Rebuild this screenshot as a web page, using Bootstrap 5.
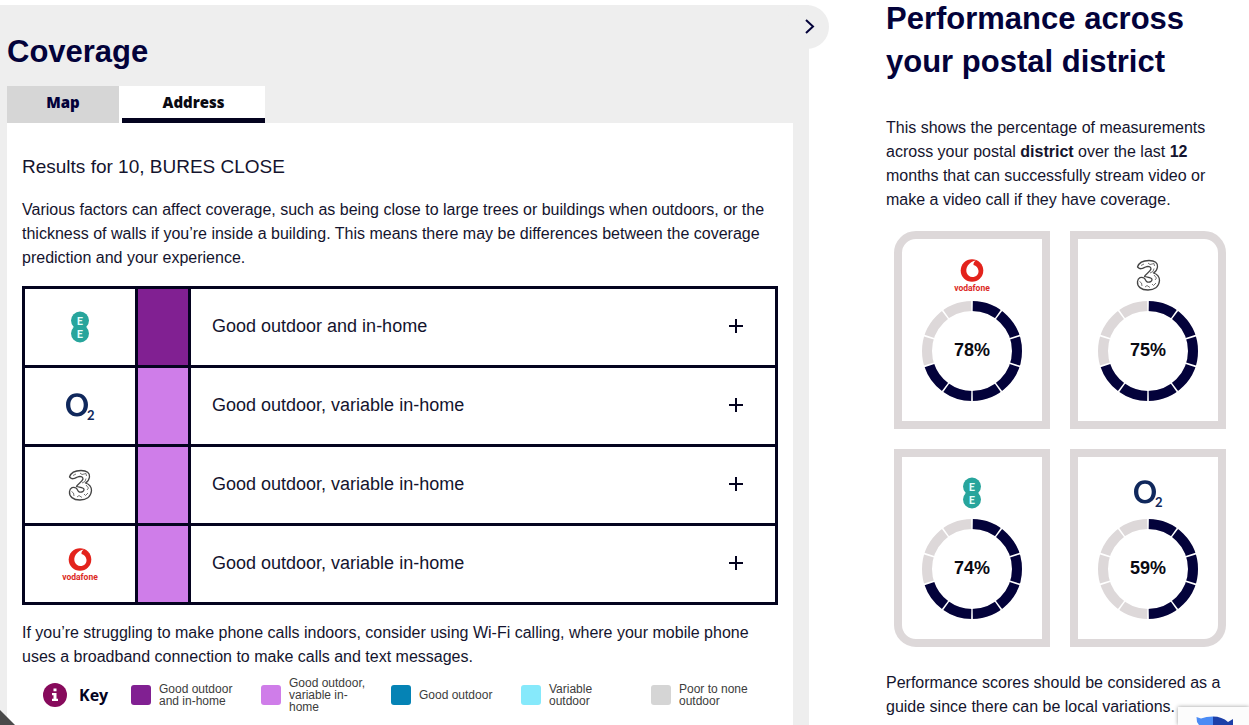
<!DOCTYPE html>
<html lang="en">
<head>
<meta charset="utf-8">
<meta name="viewport" content="width=device-width, initial-scale=1">
<title>Coverage and performance</title>
<link href="https://cdn.jsdelivr.net/npm/bootstrap@5.3.0/dist/css/bootstrap.min.css" rel="stylesheet">
<style>
  :root { --navy: #03023a; --line: #04031f; --grey: #ddd8d9; --good: #812092; --variable: #cf7de9; }
  body { font-family: "Liberation Sans", Arial, sans-serif; font-size: 16px; line-height: 24px; color: #14142e; background: #fff; overflow: hidden; }
  .layout { display: grid; grid-template-columns: minmax(0, 1fr) 440px; min-height: 100vh; }
  .coverage { background: #eee; margin-top: 5px; padding: 27px 16px 0 7px; }
  .title { font-size: 31px; font-weight: 700; color: var(--navy); line-height: 40px; margin: 0 0 14px; }
  .toggle { right: -20px; top: 0; width: 44px; height: 44px; border: 0; border-radius: 50%; background: #eee; color: var(--navy); padding: 0 0 3px 6px; }
  .tabs button { height: 37px; border: 0; font: 800 15px/32px "Open Sans", sans-serif; padding: 0 0 5px; display: block; }
  .tab-map { width: 112px; background: #d6d6d6; color: var(--navy); }
  .tab-address { width: 143px; background: #fff; color: #0a0a12; border-bottom: 5px solid var(--line) !important; padding: 0 !important; }
  .tab-wrap { background: #fff; padding-left: 3px; }
  .panel { background: #fff; padding: 30px 15px 24px; }
  .result { font-size: 19px; font-weight: 400; line-height: 28px; margin: 0 0 17px; }
  .operators { border: 3px solid var(--line); margin: 16px 0; }
  .operators li + li { border-top: 3px solid var(--line); }
  .operators li { height: 79px; }
  .operators li:first-child { height: 76px; }
  .brand { width: 110px; }
  .band { width: 56px; border: solid var(--line); border-width: 0 3px; background: var(--variable); }
  .band-good { background: var(--good); }
  .operators button { border: 0; background: none; font-size: 18px; color: #14142e; padding: 0 31px 2px 21px; text-align: left; }
  .legend { height: 36px; margin-top: 8px; padding-left: 21px; }
  .legend h3 { font: 700 16px/20px "Open Sans", sans-serif; color: var(--line); margin: 0 0 0 12px; width: 52px; }
  .legend ul { font-size: 12px; line-height: 12px; color: #3c3c3c; }
  .legend li { width: 130px; gap: 8px; padding-right: 24px; }
  .swatch { width: 20px; height: 20px; border-radius: 3px; flex: none; }
  .s-variable { background: var(--variable); } .s-outdoor { background: #0583b5; } .s-voutdoor { background: #86e9fb; } .s-none { background: #d5d5d5; }
  .performance { padding: 0 23px 0 77px; }
  .performance h2 { font-size: 31px; font-weight: 700; line-height: 43px; color: var(--navy); margin: -3px 0 33px; }
  .scores { display: grid; grid-template-columns: 1fr 1fr; gap: 20px; margin: 19px 0 24px 8px; }
  .score { height: 198px; border: 8px solid var(--grey); padding-top: 16px; }
  .score:nth-child(1) { border-top-left-radius: 22px; }
  .score:nth-child(2) { border-top-right-radius: 22px; }
  .score:nth-child(3) { border-bottom-left-radius: 22px; }
  .score:nth-child(4) { border-bottom-right-radius: 22px; }
  .ring { font-size: 18px; font-weight: 700; color: #0a0a12; width: 100px; height: 100px; margin-top: 6px; padding-bottom: 2px; }
  .corner { left: 0; bottom: 0; width: 15px; height: 15px; background: #4a4a4a; clip-path: polygon(0 0, 100% 100%, 0 100%); }
  .captcha { right: 0; bottom: 0; width: 71px; height: 18px; background: #fcfcfc; box-shadow: 0 0 4px #999; overflow: hidden; }
  .captcha svg { display: block; }
</style>
</head>
<body>
<svg class="d-none">
  <symbol id="ee" viewBox="0 0 40 40">
    <circle cx="20" cy="13.500" r="9" fill="#27a59c"/><circle cx="20" cy="26.500" r="9" fill="#27a59c"/>
    <text x="20" y="18" font-family="Lato, sans-serif" font-weight="700" font-size="11" fill="#e4fffc" text-anchor="middle">E</text>
    <text x="20" y="31" font-family="Lato, sans-serif" font-weight="700" font-size="11" fill="#e4fffc" text-anchor="middle">E</text>
  </symbol>
  <symbol id="o2" viewBox="0 0 40 40">
    <path fill-rule="evenodd" d="M17 7.200C23.500 7.200 28 12 28 18.700C28 25.500 23.500 30.500 17 30.500C10.500 30.500 6 25.500 6 18.700C6 12 10.500 7.200 17 7.200ZM17 10.700C12.800 10.700 10.300 14 10.300 18.800C10.300 23.600 12.800 27 17 27C21.200 27 23.700 23.600 23.700 18.800C23.700 14 21.200 10.700 17 10.700Z" fill="#10285c"/>
    <text x="27" y="34" font-family="Lato, sans-serif" font-weight="700" font-size="13" fill="#10285c">2</text>
  </symbol>
  <symbol id="three" viewBox="0 0 40 40">
    <path d="M9.500 12C11 7 16 5.500 21 5.500C27 5.500 30 8 29.500 12C29 15 27.500 17 25.500 18C30 19.500 31.500 22 31.500 25.500C31 32 26 35 20 35C13 35 9 31.500 9.500 26.500C10 22.500 13.500 21.500 16 23C18 24.500 17.500 26.500 19.500 27C22 27.500 24 26.500 24 24.500C24 22.500 20 22.500 16.500 21.500C17.500 19 22 17 23 14C23 11.500 20 11 17.500 12C14.500 13.500 12.500 15 9.500 12Z" fill="#fff" stroke="#444" stroke-width="1.300" stroke-linejoin="round"/>
    <path d="M20 8L22 9.500L26 8.500L26.500 11M26 13.500L25 16.500L22 18M26 20L28.500 23L27 25M28 28L25.500 30.500L24 29M22 32.500L19 30.500L17 32M14 31L13.500 28L11.500 26.500M13 10.500L16 9" fill="none" stroke="#666" stroke-width=".9"/>
  </symbol>
  <symbol id="vodafone" viewBox="0 0 40 40">
    <circle cx="20" cy="15.500" r="11.300" fill="#e3231c"/>
    <path d="M24 5.500C21 5.800 18 7.500 16 10.300C12.300 15.500 15 22 20.300 22C24.300 22 26.800 19.200 26.500 15.700C26.200 12.500 24.200 10.500 21.500 9.900C21.300 8 22.300 6.500 24 5.500Z" fill="#fff"/>
    <text x="20" y="36" font-family="Roboto, sans-serif" font-weight="700" font-size="8.500" fill="#dc2a25" text-anchor="middle">vodafone</text>
  </symbol>
  <symbol id="plus" viewBox="0 0 16 16"><path d="M8 1V15M1 8H15" stroke="#04031f" stroke-width="2"/></symbol>
  <symbol id="notches" viewBox="0 0 100 100">
    <circle cx="50" cy="50" r="45" fill="none" stroke="#fff" stroke-width="12" pathLength="360" stroke-dasharray="2 34" stroke-dashoffset="1" transform="rotate(-90 50 50)"/>
  </symbol>
</svg>

<div class="layout">
  <main class="coverage position-relative">
    <button class="toggle position-absolute" type="button" aria-label="Expand panel">
      <svg width="12" height="16" viewBox="0 0 12 16" fill="none" stroke="currentColor" stroke-width="2"><path d="M2 2L9 8.500L2 15"/></svg>
    </button>
    <h1 class="title">Coverage</h1>
    <div class="tabs d-flex" role="tablist">
      <button class="tab-map" type="button" role="tab" aria-selected="false">Map</button>
      <div class="tab-wrap"><button class="tab-address" type="button" role="tab" aria-selected="true">Address</button></div>
    </div>
    <section class="panel">
      <h2 class="result">Results for 10, BURES CLOSE</h2>
      <p class="mb-0">Various factors can affect coverage, such as being close to large trees or buildings when outdoors, or the thickness of walls if you’re inside a building. This means there may be differences between the coverage prediction and your experience.</p>
      <ul class="operators list-unstyled">
        <li class="d-flex">
          <div class="brand d-flex align-items-center justify-content-center"><svg width="40" height="40" role="img" aria-label="EE logo"><use href="#ee"/></svg></div>
          <div class="band band-good"></div>
          <button class="flex-grow-1 d-flex align-items-center justify-content-between" type="button"><span>Good outdoor and in-home</span><svg width="16" height="16"><use href="#plus"/></svg></button>
        </li>
        <li class="d-flex">
          <div class="brand d-flex align-items-center justify-content-center"><svg width="40" height="40" role="img" aria-label="O2 logo"><use href="#o2"/></svg></div>
          <div class="band"></div>
          <button class="flex-grow-1 d-flex align-items-center justify-content-between" type="button"><span>Good outdoor, variable in-home</span><svg width="16" height="16"><use href="#plus"/></svg></button>
        </li>
        <li class="d-flex">
          <div class="brand d-flex align-items-center justify-content-center"><svg width="40" height="40" role="img" aria-label="Three logo"><use href="#three"/></svg></div>
          <div class="band"></div>
          <button class="flex-grow-1 d-flex align-items-center justify-content-between" type="button"><span>Good outdoor, variable in-home</span><svg width="16" height="16"><use href="#plus"/></svg></button>
        </li>
        <li class="d-flex">
          <div class="brand d-flex align-items-center justify-content-center"><svg width="40" height="40" role="img" aria-label="Vodafone logo"><use href="#vodafone"/></svg></div>
          <div class="band"></div>
          <button class="flex-grow-1 d-flex align-items-center justify-content-between" type="button"><span>Good outdoor, variable in-home</span><svg width="16" height="16"><use href="#plus"/></svg></button>
        </li>
      </ul>
      <p class="mb-0">If you’re struggling to make phone calls indoors, consider using Wi-Fi calling, where your mobile phone uses a broadband connection to make calls and text messages.</p>
      <div class="legend d-flex align-items-center">
        <svg class="flex-shrink-0" width="24" height="24" viewBox="0 0 24 24"><circle cx="12" cy="12" r="12" fill="#870a5c"/><path d="M10.500 5.500H13.500V8.200H10.500ZM9 10H13.500V15.700H15V18H9V15.700H10.500V12.200H9Z" fill="#fff"/></svg>
        <h3 class="flex-shrink-0">Key</h3>
        <ul class="list-unstyled d-flex align-items-center mb-0">
          <li class="d-flex align-items-center"><span class="swatch band-good"></span><span>Good outdoor and in-home</span></li>
          <li class="d-flex align-items-center"><span class="swatch s-variable"></span><span>Good outdoor, variable in-home</span></li>
          <li class="d-flex align-items-center"><span class="swatch s-outdoor"></span><span>Good outdoor</span></li>
          <li class="d-flex align-items-center"><span class="swatch s-voutdoor"></span><span>Variable outdoor</span></li>
          <li class="d-flex align-items-center"><span class="swatch s-none"></span><span>Poor to none outdoor</span></li>
        </ul>
      </div>
    </section>
  </main>

  <aside class="performance">
    <h2>Performance across your postal district</h2>
    <p class="mb-0">This shows the percentage of measurements across your postal <b>district</b> over the last <b>12</b> months that can successfully stream video or make a video call if they have coverage.</p>
    <div class="scores">
      <div class="score d-flex flex-column align-items-center">
        <svg width="40" height="40" role="img" aria-label="Vodafone logo"><use href="#vodafone"/></svg>
        <div class="ring position-relative d-flex align-items-center justify-content-center">
          <svg class="position-absolute top-0 start-0" width="100" height="100" viewBox="0 0 100 100"><g fill="none" stroke-width="10" transform="rotate(-90 50 50)"><circle cx="50" cy="50" r="45" stroke="#ddd8d9"/><circle cx="50" cy="50" r="45" stroke="#03023a" pathLength="360" stroke-dasharray="252 108"/></g><use href="#notches"/></svg>
          <span class="position-relative">78%</span>
        </div>
      </div>
      <div class="score d-flex flex-column align-items-center">
        <svg width="40" height="40" role="img" aria-label="Three logo"><use href="#three"/></svg>
        <div class="ring position-relative d-flex align-items-center justify-content-center">
          <svg class="position-absolute top-0 start-0" width="100" height="100" viewBox="0 0 100 100"><g fill="none" stroke-width="10" transform="rotate(-90 50 50)"><circle cx="50" cy="50" r="45" stroke="#ddd8d9"/><circle cx="50" cy="50" r="45" stroke="#03023a" pathLength="360" stroke-dasharray="252 108"/></g><use href="#notches"/></svg>
          <span class="position-relative">75%</span>
        </div>
      </div>
      <div class="score d-flex flex-column align-items-center">
        <svg width="40" height="40" role="img" aria-label="EE logo"><use href="#ee"/></svg>
        <div class="ring position-relative d-flex align-items-center justify-content-center">
          <svg class="position-absolute top-0 start-0" width="100" height="100" viewBox="0 0 100 100"><g fill="none" stroke-width="10" transform="rotate(-90 50 50)"><circle cx="50" cy="50" r="45" stroke="#ddd8d9"/><circle cx="50" cy="50" r="45" stroke="#03023a" pathLength="360" stroke-dasharray="252 108"/></g><use href="#notches"/></svg>
          <span class="position-relative">74%</span>
        </div>
      </div>
      <div class="score d-flex flex-column align-items-center">
        <svg width="40" height="40" role="img" aria-label="O2 logo"><use href="#o2"/></svg>
        <div class="ring position-relative d-flex align-items-center justify-content-center">
          <svg class="position-absolute top-0 start-0" width="100" height="100" viewBox="0 0 100 100"><g fill="none" stroke-width="10" transform="rotate(-90 50 50)"><circle cx="50" cy="50" r="45" stroke="#ddd8d9"/><circle cx="50" cy="50" r="45" stroke="#03023a" pathLength="360" stroke-dasharray="180 180"/></g><use href="#notches"/></svg>
          <span class="position-relative">59%</span>
        </div>
      </div>
    </div>
    <p class="mb-0">Performance scores should be considered as a guide since there can be local variations.</p>
  </aside>
</div>
<div class="corner position-fixed"></div>
<div class="captcha position-fixed"><svg width="71" height="18" viewBox="0 0 71 18"><path d="M18.500 10L23 11.500Q28 9.500 35 9.500V18H21L19 15Z" fill="#4a8bf5"/><path d="M35 9.500Q44 9.500 50 15L55 12V18H35Z" fill="#1c3fa8"/></svg></div>
<script src="https://cdn.jsdelivr.net/npm/bootstrap@5.3.0/dist/js/bootstrap.bundle.min.js"></script>
</body>
</html>
